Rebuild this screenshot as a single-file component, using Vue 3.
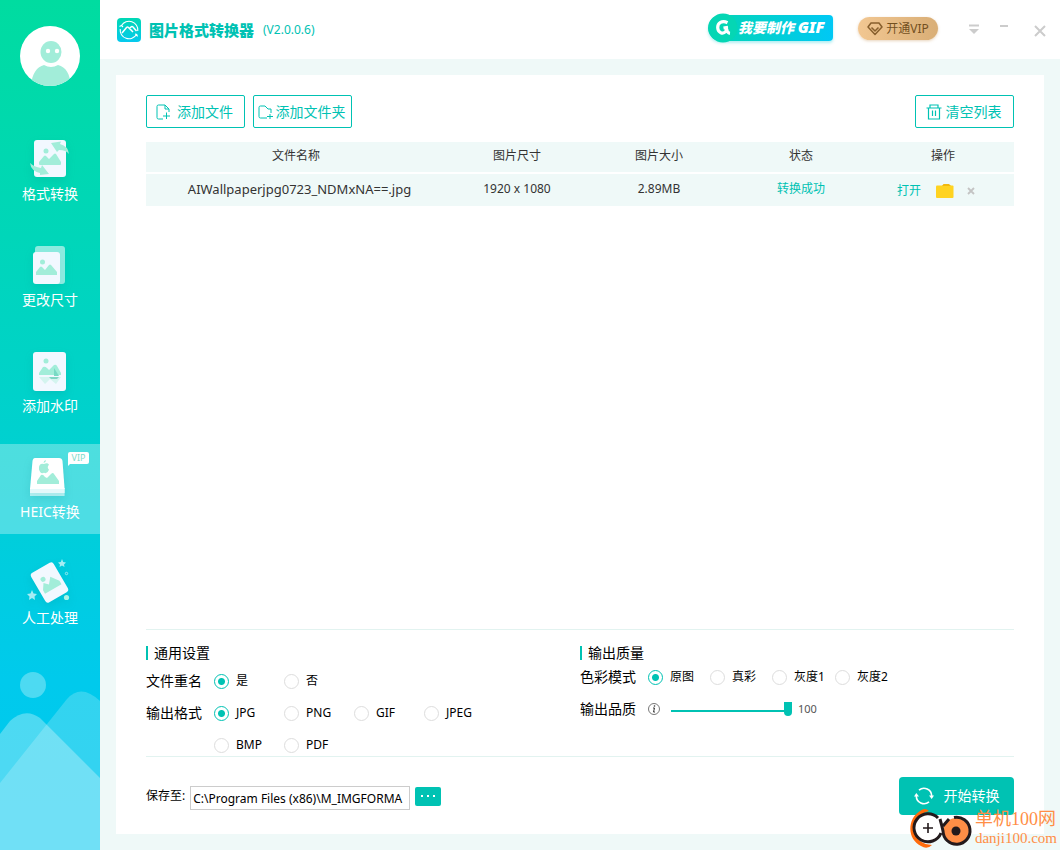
<script setup>
import { ref } from 'vue'

const active = ref('heic')
const navItems = [
  { id: 'format', label: '格式转换' },
  { id: 'resize', label: '更改尺寸' },
  { id: 'watermark', label: '添加水印' },
  { id: 'heic', label: 'HEIC转换' },
  { id: 'ai', label: '人工处理' },
]

const files = ref([
  { name: 'AIWallpaperjpg0723_NDMxNA==.jpg', dimensions: '1920 x 1080', size: '2.89MB', status: '转换成功' },
])

const rename = ref('是')
const format = ref('JPG')
const mode = ref('原图')
const quality = ref(100)
const savePath = ref('C:\\Program Files (x86)\\M_IMGFORMA')
const formats = ['JPG', 'PNG', 'GIF', 'JPEG', 'BMP', 'PDF']
const modes = ['原图', '真彩', '灰度1', '灰度2']
</script>

<template>
  <div class="app">
    <aside class="sidebar">
      <svg class="hills" viewBox="0 0 100 180" aria-hidden="true">
        <circle cx="33" cy="15" r="13" fill="#fff" fill-opacity=".3" />
        <path d="M0 113 67 29Q81 13 100 31V180H0Z" fill="#fff" fill-opacity=".2" />
        <path d="M0 64 10 51Q25 37 40 48L100 108V180H0Z" fill="#fff" fill-opacity=".3" />
      </svg>
      <button class="avatar" type="button" aria-label="用户">
        <svg viewBox="0 0 60 60">
          <defs><clipPath id="face"><circle cx="30" cy="30" r="30" /></clipPath></defs>
          <circle cx="30" cy="30" r="30" fill="#fff" />
          <g clip-path="url(#face)">
            <ellipse cx="31" cy="26" rx="10.500" ry="11" fill="#a2edd9" />
            <circle cx="28" cy="25" r="2.200" fill="#fff" /><circle cx="37" cy="25" r="2.200" fill="#fff" />
            <path d="M11 60C12 47 17 41 24 39Q31 43 38 39C46 41 50 48 51 60Z" fill="#a2edd9" />
          </g>
        </svg>
      </button>
      <nav class="nav">
        <button
          v-for="item in navItems" :key="item.id" type="button"
          class="nav-item" :class="{ active: active === item.id }" @click="active = item.id"
        >
          <svg class="nav-icon" viewBox="0 0 60 50" aria-hidden="true">
            <g v-if="item.id === 'format'">
              <rect x="14" y="4" width="32" height="37" rx="3" fill="#f2f8ff" />
              <circle cx="26" cy="15" r="2.500" fill="#a2edd9" />
              <path d="M19 28V26L24 20Q25 19 26 20L29 23 34 18Q35 17 36 18L41 26V28Q41 29 40 29H20Q19 29 19 28Z" fill="#a2edd9" />
              <path d="M31 7 41 5.500 40 8Q48 10 49 18Q46 14 39 14L37 16Z" fill="#a2edd9" />
              <path d="M29 38 20 39 20 37Q11 35 10 27Q14 31 21 32L22 29Z" fill="#a2edd9" />
            </g>
            <g v-else-if="item.id === 'resize'">
              <rect x="15" y="4" width="30" height="38" rx="3" fill="#fff" fill-opacity=".55" />
              <rect x="13" y="10" width="27" height="32" rx="3" fill="#f2f8ff" />
              <circle cx="22.500" cy="20" r="2.500" fill="#a2edd9" />
              <path d="M16 32V30L20 25Q21 24 22 25L25 28 29 23Q30 22 31 23L37 30V33H16Z" fill="#a2edd9" />
            </g>
            <g v-else-if="item.id === 'watermark'">
              <rect x="13" y="4" width="33" height="39" rx="3" fill="#f2f8ff" />
              <circle cx="26" cy="13" r="2.500" fill="#a2edd9" />
              <path d="M19 25 23 19Q25 18 27 20L29 22 34 17Q36 16 37 18L41 25V27H19Z" fill="#a2edd9" />
              <path d="M19 29H41L36 36 30 31 25 36Z" fill="#d4f4ef" />
              <path d="M34 20V28H39Z" fill="#78d9c4" /><path d="M29 29H39L37 31H31Z" fill="#80d6c4" />
            </g>
            <g v-else-if="item.id === 'heic'">
              <path d="M10 34H44.600V42H10Z" fill="#fff" fill-opacity=".55" />
              <path d="M10 34H44.600V39H10Z" fill="#e3f8fa" />
              <path d="M15 4H39Q42 4 42.500 7L44.600 35H10L12.500 7Q13 4 15 4Z" fill="#fff" />
              <path d="M24 10Q27.500 8.300 29 10.700Q26.500 13 29 15.700Q27 20.500 24 18.700Q20.500 20.500 19 15.500Q18.300 9 24 10ZM23.500 9Q23.500 6.500 26 6Q26 8.500 23.500 9Z" fill="#a2edd9" />
              <path d="M17 30V27L21 21Q23 20 25 23L27 24 31 20Q33 18 34 20L39 27V30Z" fill="#a2edd9" />
            </g>
            <g v-else>
              <g transform="rotate(-30 29.500 22.500)">
                <rect x="16.500" y="5.500" width="26" height="34" rx="3" fill="#f2f8ff" />
                <circle cx="25.500" cy="16.500" r="2.500" fill="#a2edd9" />
                <path d="M20 30V26L24 20 28 24 33 18 39 26V30Z" fill="#a2edd9" />
              </g>
              <path transform="translate(0 -4)" d="M42 3 43.200 6 46 6.500 44 8.500 44.500 11 42 9.500 39.500 11 40 8.500 38 6.500 40.800 6Z M12 34 13.500 37.500 17 38 14.500 40.500 15 44 12 42 9 44 9.500 40.500 7 38 10.500 37.500Z" fill="#fff" fill-opacity=".65" />
              <circle cx="46.500" cy="13.500" r="1.200" fill="none" stroke="#9be9ee" />
              <circle cx="46.500" cy="37.500" r="2.600" fill="#a9f2e6" />
            </g>
          </svg>
          <span>{{ item.label }}</span>
          <span v-if="item.id === 'heic'" class="vip-tag">VIP</span>
        </button>
      </nav>
    </aside>

    <div class="main">
      <header class="header">
        <svg class="logo" viewBox="0 0 24 24" aria-hidden="true">
          <defs><linearGradient id="lg" x1="0" y1="0" x2="0" y2="1"><stop stop-color="#00d8b4" /><stop offset="1" stop-color="#06c9ee" /></linearGradient></defs>
          <rect width="24" height="24" rx="4" fill="url(#lg)" />
          <path d="M4.500 7.500A8.800 8.800 0 0 1 20.800 13M19.500 16.500A8.800 8.800 0 0 1 3.200 11M2.500 8.500 4.500 7.500 6 9M18 16 19.700 16.500 20.500 18.500" fill="none" stroke="#fff" stroke-width="1.100" />
          <path d="M5 15 9.500 9.500Q10.500 8.500 11.500 9.500L16 14M12.500 10.500 14 9Q15 8 16 9L19.500 13" fill="none" stroke="#fff" stroke-width="1.500" />
        </svg>
        <h1>图片格式转换器</h1>
        <span class="version">(V2.0.0.6)</span>
        <a class="gif-link" href="#">
          <svg viewBox="0 0 30 30" aria-hidden="true">
            <circle cx="15" cy="15" r="14.500" fill="#05d6b4" />
            <path d="M19.500 9.700C14 7 9.500 10 9.700 14.800C10 20 15 21.500 17.700 18.500Q19 16.500 18.500 14.500L15.500 15M18.700 16Q19 20 22 20.300" fill="none" stroke="#fff" stroke-width="3.200" />
          </svg>
          <span>我要制作 <b>GIF</b></span>
        </a>
        <button class="vip-button" type="button">
          <svg viewBox="0 0 16 14" aria-hidden="true"><path d="M4 1H12L15 5 8 12.500 1 5ZM4.500 5.500 8 9 11.500 5.500" fill="none" stroke="#885f2d" stroke-width="1.500" stroke-linejoin="round" /></svg>
          <span>开通VIP</span>
        </button>
        <div class="window-controls">
          <button type="button" aria-label="菜单"><svg viewBox="0 0 12 12"><path d="M1 1.500H11" stroke="#ccc" stroke-width="2" /><path d="M1 5H11L6 10Z" fill="#ccc" /></svg></button>
          <button type="button" aria-label="最小化"><svg viewBox="0 0 12 12"><path d="M2 2H10" stroke="#ccc" stroke-width="2" /></svg></button>
          <button class="close" type="button" aria-label="关闭"><svg viewBox="0 0 12 12"><path d="M1 2 11 12M11 2 1 12" stroke="#ccc" stroke-width="2" /></svg></button>
        </div>
      </header>

      <main class="panel">
        <div class="toolbar">
          <button class="outline" type="button">
            <svg viewBox="0 0 16 16" aria-hidden="true"><path d="M7 15H2.500Q1 15 1 13.500V2.500Q1 1 2.500 1H9L13 5V8M9 1V5H13M10.500 8.500V15M7 12H14" fill="none" stroke="#00c2b3" /></svg>
            <span>添加文件</span>
          </button>
          <button class="outline folder-button" type="button">
            <svg viewBox="0 0 16 16" aria-hidden="true"><path d="M9 14H2.500Q1 14 1 12.500V3.500Q1 2 2.500 2H7L10 5H13V9M12 10V15M9 12.500H15" fill="none" stroke="#00c2b3" /></svg>
            <span>添加文件夹</span>
          </button>
          <button class="outline clear" type="button">
            <svg viewBox="0 0 16 16" aria-hidden="true"><path d="M.500 4H15.500M4 3.500V1H12V3.500M2.500 4V15H13.500V4M6.500 6.500V12M9.500 6.500V12" fill="none" stroke="#00c2b3" stroke-width="1.200" /></svg>
            <span>清空列表</span>
          </button>
        </div>

        <table class="files">
          <thead>
            <tr><th class="name">文件名称</th><th>图片尺寸</th><th>图片大小</th><th>状态</th><th>操作</th></tr>
          </thead>
          <tbody>
            <tr v-for="file in files" :key="file.name">
              <td class="file-name">{{ file.name }}</td>
              <td>{{ file.dimensions }}</td>
              <td>{{ file.size }}</td>
              <td class="done">{{ file.status }}</td>
              <td>
                <div class="actions">
                  <a href="#">打开</a>
                  <button type="button" aria-label="打开文件夹"><svg viewBox="0 0 18 14"><rect y="1.500" width="17.500" height="12.500" rx="1" fill="#ffd321" /><path d="M6 2 7.500 0H13L15 2Z" fill="#f2b90d" /></svg></button>
                  <button type="button" class="remove" aria-label="移除"><svg viewBox="0 0 8 8"><path d="M1 1 7 7M7 1 1 7" stroke="#c4c4c4" stroke-width="1.800" /></svg></button>
                </div>
              </td>
            </tr>
          </tbody>
        </table>

        <div class="settings">
          <section>
            <h2>通用设置</h2>
            <div class="rows">
              <div class="setting" role="radiogroup" aria-label="文件重名">
                <span class="caption">文件重名</span>
                <div class="options">
                  <label v-for="v in ['是', '否']" :key="v"><input v-model="rename" type="radio" name="rename" :value="v" /><span>{{ v }}</span></label>
                </div>
              </div>
              <div class="setting" role="radiogroup" aria-label="输出格式">
                <span class="caption">输出格式</span>
                <div class="options">
                  <label v-for="v in formats" :key="v"><input v-model="format" type="radio" name="format" :value="v" /><span>{{ v }}</span></label>
                </div>
              </div>
            </div>
          </section>
          <section class="quality">
            <h2>输出质量</h2>
            <div class="rows">
              <div class="setting" role="radiogroup" aria-label="色彩模式">
                <span class="caption">色彩模式</span>
                <div class="options">
                  <label v-for="v in modes" :key="v"><input v-model="mode" type="radio" name="mode" :value="v" /><span>{{ v }}</span></label>
                </div>
              </div>
              <div class="setting slider-row">
                <label class="caption" for="quality">输出品质</label>
                <svg class="info" viewBox="0 0 12 12" aria-hidden="true"><circle cx="6" cy="6" r="5.500" fill="none" stroke="#555" stroke-width=".8" /><path d="M5 5H6.500L5.500 9H7" fill="none" stroke="#333" /><circle cx="6.500" cy="3" r=".8" fill="#333" /></svg>
                <input id="quality" v-model="quality" type="range" min="0" max="100" />
                <output for="quality">{{ quality }}</output>
              </div>
            </div>
          </section>
        </div>

        <footer class="save">
          <label for="path">保存至:</label>
          <input id="path" v-model="savePath" type="text" />
          <button class="browse" type="button" aria-label="浏览"><svg viewBox="0 0 16 4"><path d="M1 1H3V3H1ZM7 1H9V3H7ZM13 1H15V3H13Z" fill="#fff" /></svg></button>
          <button class="start" type="button">
            <svg viewBox="0 0 20 20" aria-hidden="true"><path d="M5 4.200A7.700 7.700 0 0 1 17.700 10M15 15.800A7.700 7.700 0 0 1 2.300 10" fill="none" stroke="#fff" stroke-width="1.600" /><path d="M0 10.500 2.300 7 5 10.500ZM15 9.500 17.700 13 20 9.500Z" fill="#fff" /></svg>
            <span>开始转换</span>
          </button>
        </footer>
      </main>
    </div>

    <div class="site-mark">
      <svg viewBox="0 0 64 44" aria-hidden="true">
        <path d="M20 5Q16 1 11 5C-2 13-2 33 12 40Q18 44 23 39Q9 38 6 27C3 16 9 8 20 5Z" fill="#ff6b0c" />
        <path d="M29 12A14 14 0 1 0 32 27" fill="#fff" stroke="#231a1c" stroke-width="3" />
        <path d="M14 22H24M19 17V27" stroke="#231a1c" stroke-width="1.600" />
        <circle cx="47" cy="25" r="13" fill="#ff8e46" />
        <path d="M31 13Q33 20 34 25A13.500 13.500 0 1 0 45 11.500M34 20 40 13" fill="none" stroke="#231a1c" stroke-width="3" />
        <circle cx="47" cy="25" r="4.500" fill="#231a1c" />
      </svg>
      <div><strong>单机100网</strong><span>danji100.com</span></div>
    </div>
  </div>
</template>

<style>
body { margin: 0; }
</style>

<style scoped>
* { box-sizing: border-box; }
.app {
  position: relative; display: flex; min-height: 100vh; overflow: hidden; background: #eff9f8; color: #000;
  font: 12px/16px "Noto Sans", "Noto Sans CJK SC", sans-serif;
}
button { border: 0; padding: 0; background: none; font: inherit; color: inherit; cursor: pointer; }
a { text-decoration: none; }
svg { display: block; flex: none; overflow: visible; }

.sidebar { position: relative; flex: none; width: 100px; background: linear-gradient(#00dca0, #00d3c6 42%, #00caec 80%, #00c8f0); }
.hills { position: absolute; left: 0; bottom: 0; width: 100%; }
.avatar { display: block; width: 60px; height: 60px; margin: 26px auto 40px; }
.nav { position: relative; display: flex; flex-direction: column; gap: 16px; }
.nav-item { position: relative; display: flex; flex-direction: column; align-items: center; height: 90px; padding-top: 10px; font-size: 14px; line-height: 20px; color: #fff; }
.nav-item.active { background: rgba(255, 255, 255, .3); }
.nav-icon { width: 60px; height: 50px; margin-bottom: -2px; filter: drop-shadow(0 4px 4px rgba(0, 120, 120, .15)); }
.vip-tag { position: absolute; top: 8px; right: 11px; width: 21px; height: 12px; border-radius: 2px 2px 2px 0; background: #fff; color: #7fdccb; font-size: 9px; line-height: 12px; text-align: center; }
.vip-tag::after { content: ""; position: absolute; top: 11px; left: 0; border-top: 3px solid #fff; border-right: 3px solid transparent; }

.main { flex: 1; min-width: 0; display: flex; flex-direction: column; }
.header { display: flex; align-items: center; height: 59px; padding: 0 14px 0 17px; background: #fff; }
.logo { width: 24px; height: 24px; }
h1 { margin: 0 9px 0 8px; color: #00c2b3; font-size: 15px; line-height: 20px; font-weight: 900; }
.version { color: #00c2b3; }
.gif-link { display: flex; align-items: center; width: 125px; height: 26px; margin: 0 25px 4px auto; border-radius: 13px 4px 4px 13px; background: linear-gradient(90deg, #04d6b2, #00c8f5); box-shadow: 0 2px 3px rgba(0, 200, 210, .3); color: #fff; font-size: 14px; font-weight: 900; font-style: italic; white-space: nowrap; }
.gif-link svg { width: 30px; height: 30px; }
.gif-link b { font-size: 16px; font-weight: 900; }
.vip-button { display: flex; align-items: center; justify-content: center; gap: 3px; width: 80px; height: 23px; margin-bottom: 2px; border-radius: 12px; background: linear-gradient(90deg, #f2c792, #d9ae76); box-shadow: 0 1px 3px rgba(200, 150, 90, .4); color: #73501f; }
.vip-button svg { width: 16px; height: 14px; }
.window-controls { display: flex; gap: 18px; margin-left: 30px; }
.window-controls svg { width: 12px; height: 12px; }
.close { margin-left: 6px; }

.panel { flex: 1; display: flex; flex-direction: column; margin: 16px; padding: 20px 30px 19px; background: #fff; }
.toolbar { display: flex; gap: 8px; }
.outline { display: flex; align-items: center; justify-content: center; gap: 5px; width: 99px; height: 33px; padding-right: 2px; border: 1px solid #00c2b3; border-radius: 2px; color: #00c2b3; font-size: 14px; white-space: nowrap; }
.outline svg { width: 16px; height: 16px; }
.folder-button { gap: 2px; }
.clear { margin-left: auto; gap: 4px; }

.files { width: 100%; margin-top: 14px; border-spacing: 0; table-layout: fixed; text-align: center; color: #333; }
.files th, .files td { height: 32px; padding: 0 0 2px; background: #eff9f8; font-weight: 400; }
.files th { border-bottom: 2px solid #fff; }
.files .name { width: 300px; }
.files .file-name { padding-left: 7px; font-size: 13px; }
.files .done { color: #00c2b3; }
.actions { display: flex; align-items: center; justify-content: center; padding: 4px 14px 0 0; }
.actions a { margin-right: 15px; color: #00c2b3; }
.actions button svg { width: 18px; height: 14px; }
.actions .remove { margin-left: 13px; }
.actions .remove svg { width: 8px; height: 8px; }

.settings { display: grid; grid-template-columns: 1fr 1fr; margin-top: auto; padding-top: 16px; border-top: 1px solid #e2f3f0; border-bottom: 1px solid #e2f3f0; }
h2 { margin: 0; padding-left: 6px; border-left: 2px solid #00c2b3; font-size: 14px; line-height: 14px; font-weight: 400; }
.rows { display: flex; flex-direction: column; gap: 10px; margin-top: 10px; }
.setting { display: flex; line-height: 22px; }
.caption { width: 68px; font-size: 14px; }
.options { flex: 1; display: grid; grid-template-columns: repeat(auto-fill, 70px); row-gap: 10px; max-width: 280px; }
.options label { display: flex; align-items: center; gap: 7px; height: 22px; white-space: nowrap; }
input[type="radio"] { appearance: none; flex: none; width: 15px; height: 15px; margin: 0; border: 1px solid #ddd; border-radius: 50%; background: #fff; }
input[type="radio"]:checked { border-color: #00c2b3; background: radial-gradient(#00c2b3 3px, #fff 4px); }
.quality .rows { margin-top: 6px; }
.quality .options { display: flex; gap: 10px; max-width: none; }
.quality .options label { min-width: 52px; }
.slider-row { align-items: center; }
.info { width: 12px; height: 12px; }
input[type="range"] { appearance: none; width: 121px; height: 20px; margin: 0 6px 0 11px; background: linear-gradient(#00c2b3, #00c2b3) center 11px / 100% 2px no-repeat; }
input[type="range"]::-webkit-slider-thumb { appearance: none; width: 8px; height: 14px; border-radius: 0 0 4px 4px; background: #00c2b3; }
output { color: #555; font-size: 11px; }

.save { display: flex; align-items: center; height: 38px; margin-top: 20px; }
.save input { width: 220px; height: 24px; margin: 4px 5px 0; padding: 0 2px; border: 1px solid #ccc; background: #fff; color: #000; font: inherit; }
.browse { display: grid; place-items: center; width: 26px; height: 19px; border-radius: 2px; background: #00c2b3; }
.browse svg { width: 16px; height: 4px; }
.start { display: flex; align-items: center; justify-content: center; gap: 10px; width: 115px; height: 38px; margin-left: auto; border-radius: 4px; background: #00c2b3; color: #fff; font-size: 14px; }
.start svg { width: 20px; height: 20px; }

.site-mark { position: absolute; right: 3px; bottom: 0; display: flex; align-items: center; gap: 2px; color: #ff8e46; pointer-events: none; }
.site-mark svg { width: 64px; height: 44px; }
.site-mark div { display: flex; flex-direction: column; font-family: "Liberation Serif", "Noto Sans CJK SC", serif; white-space: nowrap; }
.site-mark strong { font-size: 18px; line-height: 20px; font-weight: 400; }
.site-mark span { font-size: 15px; line-height: 18px; }
</style>
